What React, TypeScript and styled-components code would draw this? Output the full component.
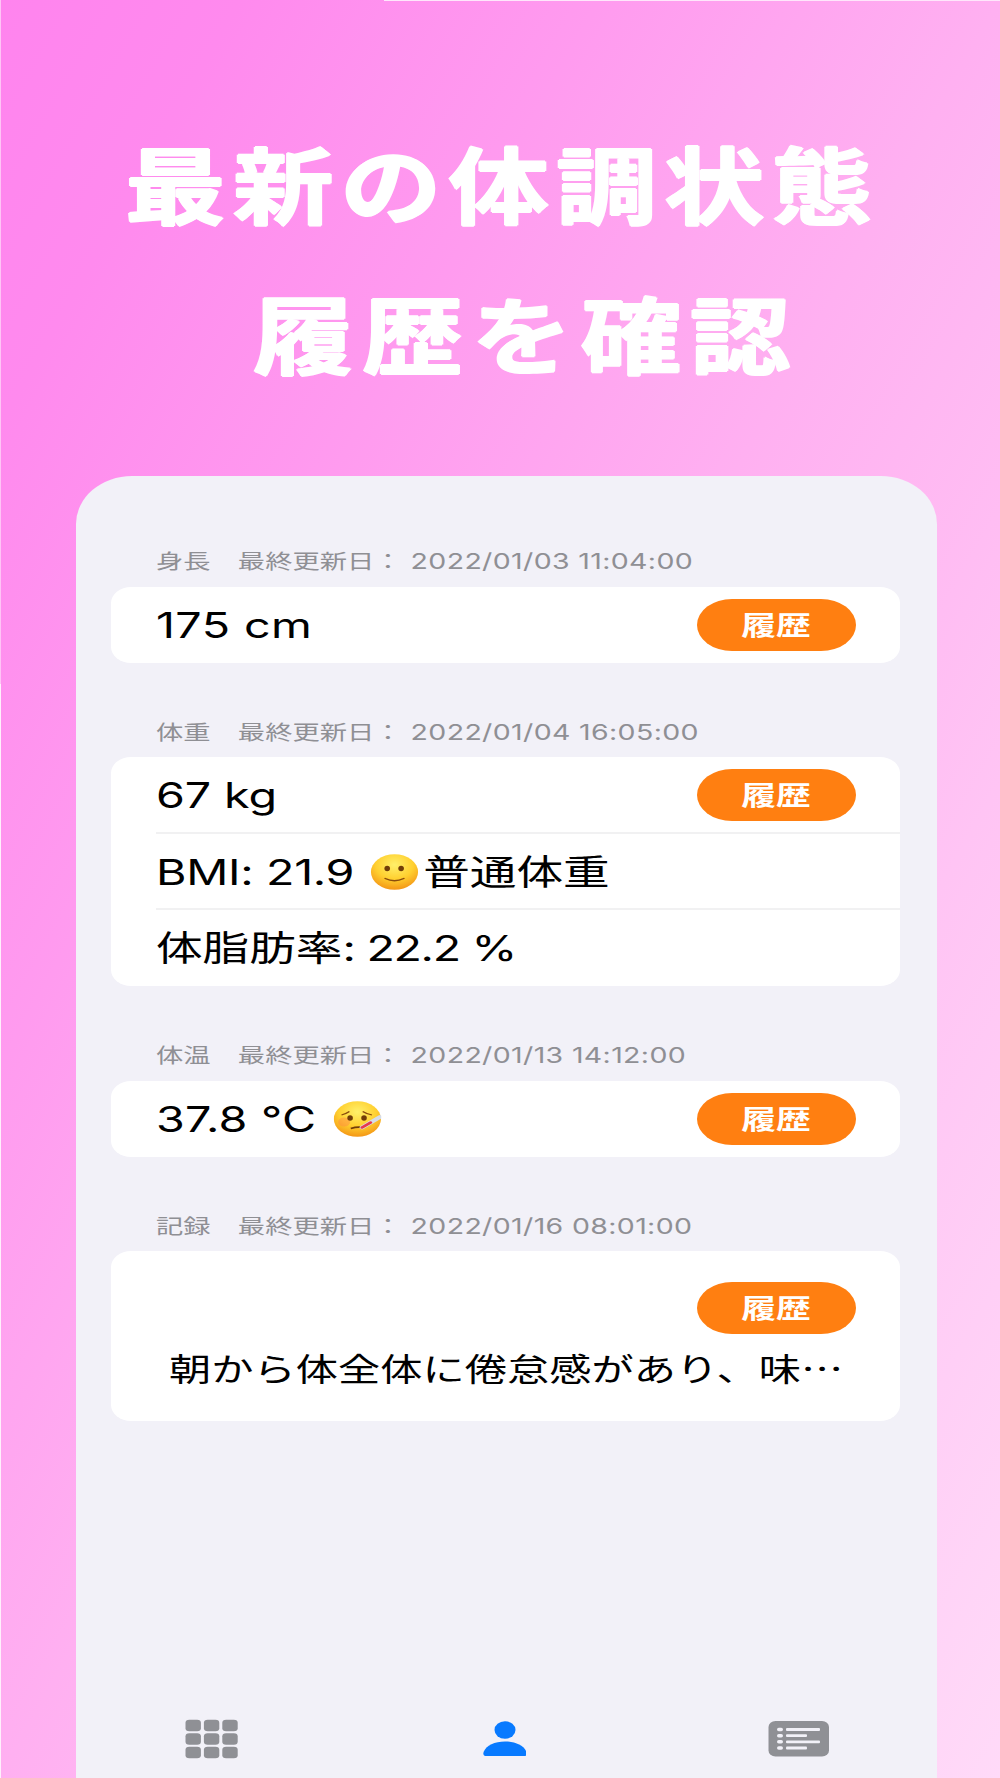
import React from 'react';
import styled, { createGlobalStyle } from 'styled-components';

const Global = createGlobalStyle`
  * { box-sizing: border-box; }
  body { margin: 0; }
`;

const cjk = `"Noto Sans CJK JP", sans-serif`;

const Page = styled.main`
  width: 1000px;
  height: 1778px;
  overflow: hidden;
  display: flex;
  flex-direction: column;
  padding-left: 1px;
  background:
    linear-gradient(#ffe6fb, #ffe6fb) 100% 0 / 616px 1px no-repeat,
    linear-gradient(#ffc4f6 684px, #fff0fc 684px) 0 0 / 1px 100% no-repeat,
    linear-gradient(to bottom right, #ff84ee 0%, #ff8aee 12%, #ff9bef 30%, #ffb0f1 50%, #ffc4f4 72%, #ffdaf8 100%);
  font-family: Inter, ${cjk};
`;

const Heading = styled.h1`
  margin: 0;
  height: 476px;
  padding: 107px 0 0 124px;
  display: flex;
  flex-direction: column;
  color: #fff;
  font: 700 84px/150px ${cjk};
`;

const HeadingLine = styled.span<{ $indent?: number; $track?: number }>`
  display: block;
  width: max-content;
  white-space: nowrap;
  margin-left: ${p => p.$indent ?? 0}px;
  letter-spacing: ${p => p.$track ?? 5.8}px;
  transform: scaleX(1.2);
  transform-origin: 0 50%;
  text-shadow: 1px 0 #fff, -1px 0 #fff, 0 1px #fff, 0 -1px #fff;
`;

const Phone = styled.section`
  margin-left: 75px;
  width: 861px;
  flex: 1;
  padding: 69px 37px 0 35px;
  display: flex;
  flex-direction: column;
  background: #f2f1f8;
  border-radius: 56px 56px 0 0 / 48px 48px 0 0;
`;

const Group = styled.section`
  margin-bottom: 53px;
`;

const Caption = styled.h2`
  margin: 0;
  height: 41.5px;
  padding-left: 45px;
  color: #8f8f94;
  font: 400 20.6px/32px Inter, ${cjk};
`;

const Wide = styled.span<{ $track?: number; $stretch?: number }>`
  display: block;
  width: max-content;
  white-space: pre;
  transform: scaleX(${p => p.$stretch ?? 1.325});
  transform-origin: 0 50%;
  letter-spacing: ${p => p.$track ?? 0}px;
`;

const Stamp = styled.span`
  margin-left: 1px;
  font-size: 21.5px;
  letter-spacing: 0.27px;
`;

const Digits = styled.span<{ $track: number }>`
  letter-spacing: ${p => p.$track}px;
`;

const Card = styled.div`
  background: #fff;
  border-radius: 20px / 16px;
  overflow: hidden;
`;

const Row = styled.div<{ $divided?: boolean }>`
  height: 76.3px;
  padding-right: 44px;
  margin-left: 45px;
  display: flex;
  align-items: center;
  justify-content: space-between;
  color: #000;
  font-size: 35.2px;
  line-height: 60px;
  box-shadow: ${p => (p.$divided ? 'inset 0 -2px #f1f1f2' : 'none')};
`;

const HistoryButton = styled.button`
  width: 159px;
  height: 52px;
  padding: 0;
  border: 0;
  border-radius: 35px / 26px;
  background: #ff7f11;
  color: #fff;
  display: flex;
  align-items: center;
  justify-content: center;
  font: 700 26px/50px ${cjk};
`;

const ButtonText = styled.span`
  display: block;
  transform: scaleX(1.34);
  padding-bottom: 2px;
`;

const Note = styled.div`
  height: 170px;
  padding: 31px 44px 0 58px;
  display: flex;
  flex-direction: column;
  color: #000;
  font: 400 31.6px/60px ${cjk};
`;

const NoteAction = styled.div`
  display: flex;
  justify-content: flex-end;
  height: 55px;
`;

const Tabs = styled.nav`
  margin: auto -37px 0 -35px;
  height: 72px;
  padding: 13px 107px 0 109px;
  display: flex;
  justify-content: space-between;
`;

const Face = styled.svg`
  display: inline-block;
  width: 36px;
  height: 36px;
  margin: 0 4px 0 2.5px;
  vertical-align: -5px;
`;

function FaceIcon({ sick = false }: { sick?: boolean }) {
  const id = sick ? 'sick' : 'smile';
  return (
    <Face viewBox="0 0 36 36">
      <defs>
        <radialGradient id={id} cx=".5" cy=".3" r=".72">
          <stop offset="0" stopColor="#fff06a" />
          <stop offset=".55" stopColor="#ffd030" />
          <stop offset="1" stopColor="#f39314" />
        </radialGradient>
      </defs>
      <circle cx="18" cy="18" r="17.8" fill={`url(#${id})`} />
      {sick && <circle cx="8" cy="21" r="4.5" fill="#ff8548" opacity=".45" />}
      <ellipse cx="12.5" cy={sick ? 17 : 14.5} rx="2.1" ry="2.8" fill="#713d08" />
      <ellipse cx="23" cy={sick ? 17 : 14.5} rx="2.1" ry="2.8" fill="#713d08" />
      {sick ? (
        <>
          <path d="M6 14Q9 13 12 10.5M22 10.5Q25 13 29 14" fill="none" stroke="#8a4c0c" strokeWidth="1.2" />
          <path d="M13 27.5Q18 25.5 22 26.5" fill="none" stroke="#713d08" strokeWidth="1.6" />
          <path d="M21.5 26.5L35 16" stroke="#d5dce8" strokeWidth="3.6" strokeLinecap="round" />
          <path d="M21.5 26.5L28 21.5" stroke="#e6394f" strokeWidth="2.4" strokeLinecap="round" />
        </>
      ) : (
        <path d="M11 24.5Q18 29 25 24.5" fill="none" stroke="#8a4c0c" strokeWidth="1.4" strokeLinecap="round" />
      )}
    </Face>
  );
}

function GridIcon() {
  return (
    <svg width="54" height="40" viewBox="0 0 54 40" fill="#8f9095">
      {[0, 1, 2].map(r => [0, 1, 2].map(c => (
        <rect key={`${r}${c}`} x={0.5 + c * 18.4} y={0.7 + r * 13.5} width="15.4" height="11.5" rx="3.8" ry="3" />
      )))}
    </svg>
  );
}

function PersonIcon() {
  return (
    <svg width="44" height="40" viewBox="-1 0 44 40" fill="#087aff">
      <ellipse cx="22" cy="11" rx="10.5" ry="8.7" />
      <path d="M2.5 37C0.5 37 0 35 .6 33C3 26.5 12 22.5 22 22.5S41 26.5 43.4 33C44 35 43.5 37 41.5 37Z" />
    </svg>
  );
}

function ListIcon() {
  return (
    <svg width="62" height="40" viewBox="0 0 62 40">
      <rect x=".5" y="2" width="60.5" height="35.5" rx="7" ry="6" fill="#8f9095" />
      {[10.5, 16.7, 22.8, 29].map((y, i) => (
        <g key={y} fill="#f2f1f8">
          <rect x="9" y={y - 1.8} width="6" height="3.6" rx="1.8" />
          <rect x="18" y={y - 1.4} width={i % 2 ? 21 : 34} height="2.8" rx="1" />
        </g>
      ))}
    </svg>
  );
}

function History() {
  return <HistoryButton><ButtonText>履歴</ButtonText></HistoryButton>;
}

function Label({ name, time }: { name: string; time: string }) {
  return <Caption><Wide>{name}　最終更新日： <Stamp>{time}</Stamp></Wide></Caption>;
}

export default function App() {
  return (
    <>
      <Global />
      <Page>
        <Heading>
          <HeadingLine>最新の体調状態</HeadingLine>
          <HeadingLine $indent={128} $track={7}>履歴を確認</HeadingLine>
        </Heading>
        <Phone>
          <Group>
            <Label name="身長" time="2022/01/03 11:04:00" />
            <Card><Row><Wide $track={0.3}>175 cm</Wide><History /></Row></Card>
          </Group>
          <Group>
            <Label name="体重" time="2022/01/04 16:05:00" />
            <Card>
              <Row $divided><Wide $track={-0.1}>67 kg</Wide><History /></Row>
              <Row $divided><Wide><Digits $track={-0.25}>BMI: 21.9 </Digits><FaceIcon />普通体重</Wide></Row>
              <Row><Wide>体脂肪率<Digits $track={-1}>: 22.2 %</Digits></Wide></Row>
            </Card>
          </Group>
          <Group>
            <Label name="体温" time="2022/01/13 14:12:00" />
            <Card><Row><Wide $track={0.2}>37.8 °C <FaceIcon sick /></Wide><History /></Row></Card>
          </Group>
          <Group>
            <Label name="記録" time="2022/01/16 08:01:00" />
            <Card>
              <Note>
                <NoteAction><History /></NoteAction>
                <Wide $stretch={1.337}>朝から体全体に倦怠感があり、味…</Wide>
              </Note>
            </Card>
          </Group>
          <Tabs><GridIcon /><PersonIcon /><ListIcon /></Tabs>
        </Phone>
      </Page>
    </>
  );
}
